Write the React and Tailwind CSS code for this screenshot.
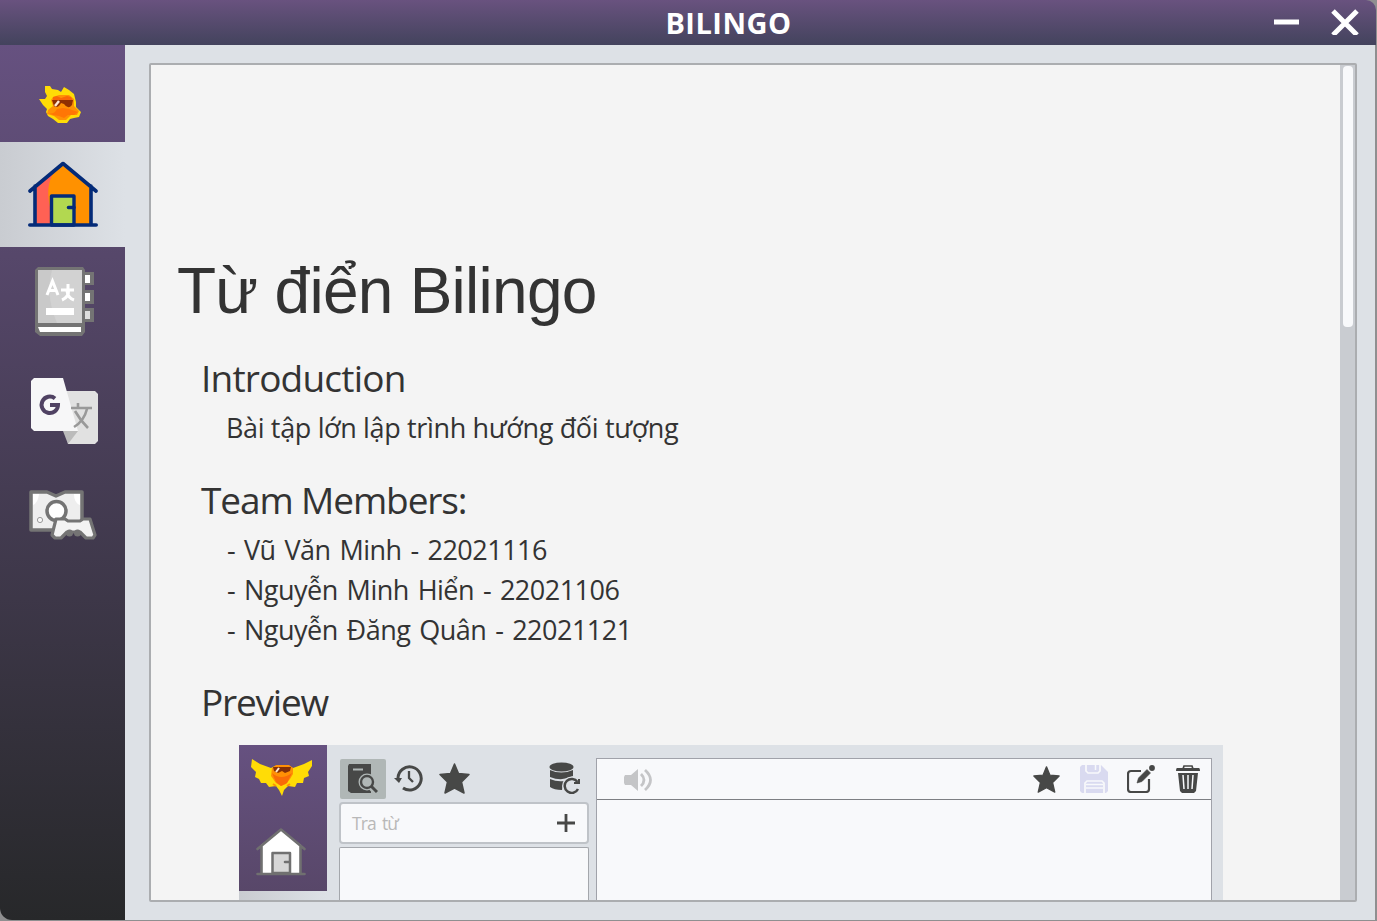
const HeadBird = () => (
  <svg viewBox="0 0 42 38" className="h-[38px] w-[42px]">
    <path d="M6 1 11 1 13 4 19 5 22 7 25 2 30 5 35 9 36 13 37 17 37 22 42 27 40 32 35 33 31 34 28 38 19 38 14 34 9 31 7 27 8 24 4 20 0 14 6 14 8 11 6 7z" fill="#ffdc06" />
    <path d="M14 12 20 10 30 10 35 14 35 21 40 26 38 30 32 30 27 35 20 35 15 31 8 29 9 25 14 21 12 15z" fill="#ff9205" />
    <path d="M14 12 18 11 22 13 28 11 32 12 34 16 32 18 14 18z" fill="#f96708" />
    <path d="M13 15H34L33 20Q29 25 25 19L22 18Q19 24 15 21z" fill="#8f3002" />
    <path d="M16 21 20 16" stroke="#ffe9d5" strokeWidth="2.4" />
    <path d="M9 28Q15 30 18 24L24 23 30 24 39 27 35 30 29 30 25 33 20 31 14 30z" fill="#ff7605" />
  </svg>
);

const House = () => (
  <svg viewBox="0 0 70 68" className="h-[68px] w-[70px]" strokeLinejoin="round" strokeLinecap="round">
    <path d="M7 24 35 3 63 24V64H7z" fill="#ff9100" />
    <path d="M7 24 26 11Q17 25 22 46V64H7z" fill="#ff6154" />
    <path d="M23.500 35H46V64H23.500z" fill="#b2d850" stroke="#042b78" strokeWidth="3.400" />
    <path d="M46 46.500H40.500M7 25V64M63 25V64M2 30 35 2.500 68 30M1.800 64H68.200" fill="none" stroke="#042b78" strokeWidth="3.600" />
  </svg>
);

const Dictionary = () => (
  <svg viewBox="0 0 60 70" className="h-[70px] w-[60px]">
    <path d="M3 0H48L50 3V65L47 69H5L0 65V3z" fill="#747474" />
    <path d="M3 3H47V56H3z" fill="#c9c9c9" />
    <path d="M17 3H47V56H22Q10 28 17 3z" fill="#d2d2d2" />
    <path d="M3 60H46V65H5z" fill="#fff" />
    <path d="M49 5H59V18H49zM49 23H59V37H49zM49 41H59V55H49z" fill="#747474" />
    <path d="M50 8H55V16H50zM50 26H55V34H50z" fill="#fff" />
    <path d="M50 44H55V52H50z" fill="#ddd" />
    <path d="M11 41H39V48H11z" fill="#fff" />
    <g fill="none" stroke="#fff" strokeWidth="3">
      <path d="M12 28 17.500 14 23 28M14 23.500H22M26 23H39M33 17V23M27 33Q34 30 33.500 23M32 24Q33 31 39 33" />
    </g>
  </svg>
);

const Translate = () => (
  <svg viewBox="0 0 68 66" className="h-[66px] w-[68px]">
    <path d="M32 13H64L67 16V63L64 66H37z" fill="#e1e1e1" />
    <path d="M32 53H47L37 66z" fill="#bbb" />
    <path d="M3 0H32L47 53H3L0 50V3z" fill="#f7f7f8" />
    <path d="M24 20.500A8.200 8.200 0 1 0 27 27H19" fill="none" stroke="#504263" strokeWidth="4" />
    <path d="M40 30H61M47 25V30M56 31Q53 43 43 49M44 33Q49 42 57 50" fill="none" stroke="#999" strokeWidth="2.600" />
  </svg>
);

const Games = () => (
  <svg viewBox="0 0 69 50" className="h-[50px] w-[69px]" strokeLinejoin="round">
    <path d="M3 2H19L28 6 37 2H54V40H3z" fill="#eee" stroke="#747474" strokeWidth="3.500" />
    <path d="M5 4H11Q10 13 5 15zM46 4H52V15Q46 13 46 4z" fill="#fff" />
    <circle cx="28.500" cy="21" r="9.500" fill="#fff" stroke="#747474" strokeWidth="3.500" />
    <circle cx="12" cy="30" r="2.600" fill="#f7f7f7" stroke="#999" strokeWidth="1" />
    <path d="M28 29H37L40 31H52L55 29H62L67 45 65 48H58L52 42H39L33 48H27L24 45z" fill="#f3f3f3" stroke="#747474" strokeWidth="3.200" />
    <circle cx="41.500" cy="43" r="3.500" fill="#747474" />
    <circle cx="49.500" cy="43" r="3.500" fill="#747474" />
  </svg>
);

const WingedBird = () => (
  <svg viewBox="0 0 62 38" className="h-[38px] w-[62px]">
    <path d="M1 0 9 5 20 9 24 7 31 8 38 7 42 9 53 5 61 1 61 7 57 13 58 17 53 19 52 24 46 24 44 28 37 27 33 31 31 37 28 31 25 27 18 28 15 24 10 24 8 20 4 18 5 13 0 8z" fill="#ffdc06" />
    <path d="M21 9 25 6 38 6 42 9 42 15 39 20 35 25 30 27 25 24 20 17z" fill="#ff9005" />
    <path d="M21 14Q30 22 41 14L36 24 30 27 25 23z" fill="#f96c08" />
    <path d="M22 8H40L39 12 34 14 31 12 27 14 23 12z" fill="#853006" />
    <path d="M25 13 28 9" stroke="#ffe9d5" strokeWidth="2" />
    <path d="M22 25 25 27M39 25 36 27" stroke="#ff9205" strokeWidth="2" />
  </svg>
);

const GreyHouse = () => (
  <svg viewBox="0 0 50 48" className="h-[48px] w-[50px]" strokeLinejoin="round" strokeLinecap="round">
    <path d="M5 17 25 2 45 17V46H5z" fill="#fff" />
    <path d="M16.500 25H34V45H16.500z" fill="#d6d6d6" stroke="#707070" strokeWidth="2.500" />
    <path d="M33 34H29M5.500 18V46M44.500 18V46M1.500 21 25 1.500 48.500 21M1.500 46H48.500" fill="none" stroke="#707070" strokeWidth="2.600" />
  </svg>
);

const STAR = "M15.500 1 19.500 10.500 30 11.500 22.500 19 25 30 15.500 25 6 30 8.500 19 1 11.500 11.500 10.500z";

const Star = ({ className }) => (
  <svg viewBox="0 0 31 31" className={className} stroke="#474847" strokeWidth="1.500" strokeLinejoin="round">
    <path d={STAR} />
  </svg>
);

const SearchBook = () => (
  <svg viewBox="0 0 30 32" className="h-[32px] w-[30px]">
    <path d="M1 1H23V30H3L0 28V3z" fill="#474847" />
    <path d="M5 6.500H15" stroke="#b0b7b6" strokeWidth="2" />
    <circle cx="19" cy="19" r="8.500" fill="#b0b7b6" />
    <path d="M23 25 28 30" stroke="#b0b7b6" strokeWidth="5" />
    <circle cx="19" cy="19" r="6" fill="none" stroke="#474847" strokeWidth="2.400" />
    <path d="M23 23 29 29" stroke="#474847" strokeWidth="3" />
  </svg>
);

const History = () => (
  <svg viewBox="0 0 29 28" className="h-[28px] w-[29px]" fill="none" stroke="#474847" strokeWidth="3">
    <path d="M4 14A11.600 11.600 0 1 1 9 24" />
    <path d="M15 7V14L19 18" strokeWidth="2.300" />
    <path d="M0 14H8L5 19z" fill="#474847" stroke="none" />
  </svg>
);

const Database = () => (
  <svg viewBox="0 0 31 32" className="h-[32px] w-[31px]">
    <g fill="#474847">
      <ellipse cx="12.500" cy="5" rx="12" ry="4.500" />
      <path d="M1 8Q12 13 24 8V14Q13 20 1 15zM1 17Q8 20 15 19L13 28Q5 28 1 25z" />
    </g>
    <circle cx="22.500" cy="24" r="9.500" fill="#dde1e6" />
    <path d="M28.500 20A7 7 0 1 0 29 27" fill="none" stroke="#474847" strokeWidth="2.500" />
    <path d="M25 21H30V17" fill="none" stroke="#474847" strokeWidth="2" />
  </svg>
);

const Speaker = () => (
  <svg viewBox="0 0 30 24" className="h-[24px] w-[30px]">
    <path d="M1 7H7L14 1V23L7 17H1L0 15V9z" fill="#c4c5c7" />
    <path d="M17 6Q23 12 17 18M21 2Q32 12 21 22" fill="none" stroke="#c4c5c7" strokeWidth="2.800" />
  </svg>
);

const Save = () => (
  <svg viewBox="0 0 28 28" className="h-[28px] w-[28px]">
    <path d="M2 0H21L28 7V26L26 28H2L0 26V2z" fill="#d9daf0" />
    <path d="M6 0V6L8 8H18L20 6V0M5 28V18L7 16H22L24 18V28" fill="none" stroke="#f8f9fb" strokeWidth="1.700" />
    <path d="M15.500 0V5M6 19.500H23M6 23H23" stroke="#f8f9fb" strokeWidth="1.500" />
  </svg>
);

const Edit = () => (
  <svg viewBox="0 0 28 28" className="h-[28px] w-[28px]">
    <path d="M14 6H4Q1 6 1 9V24Q1 27 4 27H19Q22 27 22 24V14" fill="none" stroke="#474847" strokeWidth="2.200" />
    <path d="M10 18 11.500 13 20 4.500 23.500 8 15 16.500z" fill="#474847" stroke="#474847" strokeWidth="0.600" />
    <circle cx="25" cy="3" r="2.900" fill="#474847" />
  </svg>
);

const Trash = () => (
  <svg viewBox="0 0 24 28" className="h-[28px] w-[24px]">
    <path d="M7 4 8 1H16L17 4" fill="none" stroke="#474847" strokeWidth="1.700" />
    <path d="M1 3H23Q24 3 24 6H0Q0 3 1 3zM2 8H22L20 26 18 28H6L4 26z" fill="#474847" />
    <path d="M7 10 8 24M12 10V24M17 10 16 24" stroke="#f8f9fb" strokeWidth="1.500" />
  </svg>
);

const members = ["- Vũ Văn Minh - 22021116", "- Nguyễn Minh Hiển - 22021106", "- Nguyễn Đăng Quân - 22021121"];

function TitleBar() {
  return (
    <header className="flex h-[45px] shrink-0 items-center rounded-tr-[10px] bg-linear-to-b from-[#69527f] to-[#43435d] pr-[17px]">
      <h1 className="flex-1 pl-[184px] text-center text-[29px] leading-[44px] font-bold text-white">
        <span className="tracking-[0.5px]">BILINGO</span>
      </h1>
      <svg viewBox="0 0 86 26" className="mb-[1px] h-[26px] w-[86px] shrink-0" stroke="#fff">
        <path d="M1 13H26" strokeWidth="5" />
        <path d="M60 2 84 26M84 2 60 26" strokeWidth="5" />
      </svg>
    </header>
  );
}

function Sidebar() {
  return (
    <nav className="flex w-[125px] shrink-0 flex-col rounded-bl-[12px] bg-linear-to-b from-[#665180] to-[#27282a]">
      <div className="flex h-[97px] pt-[40px] pl-[39px]"><HeadBird /></div>
      <div className="flex h-[105px] bg-linear-to-r from-[#c9ccd1] to-[#dde1e6] pt-[19px] pl-[28px]"><House /></div>
      <div className="flex h-[110px] pt-[20px] pl-[35px]"><Dictionary /></div>
      <div className="flex h-[110px] pt-[21px] pl-[31px]"><Translate /></div>
      <div className="flex h-[110px] pt-[23px] pl-[28px]"><Games /></div>
    </nav>
  );
}

function Preview() {
  return (
    <div className="ml-[88px] flex h-[156px] w-[984px] shrink-0 bg-[#dde1e6]">
      <div className="flex w-[88px] shrink-0 flex-col bg-linear-to-r from-[#c9ccd1] to-[#dde1e6]">
        <div className="flex h-[146px] flex-col bg-linear-to-b from-[#665180] to-[#584769] pt-[14px]">
          <div className="pl-[12px]"><WingedBird /></div>
          <div className="mt-[31px] pl-[17px]"><GreyHouse /></div>
        </div>
      </div>
      <div className="ml-[12px] flex w-[250px] shrink-0 flex-col pt-[14px]">
        <div className="flex h-[40px] items-center">
          <div className="ml-px flex h-[40px] w-[46px] items-center justify-center rounded-[2px] bg-[#b0b7b6]"><SearchBook /></div>
          <div className="ml-[8px] pb-[2px]"><History /></div>
          <Star className="mb-[2px] ml-[16px] h-[31px] w-[31px] fill-[#474847]" />
          <div className="ml-[79px] pb-[2px]"><Database /></div>
        </div>
        <div className="mt-[3px] flex h-[42px] shrink-0 items-center justify-between rounded-[4px] border-2 border-[#bfc3c8] bg-[#f8f9fb] pr-[11px] pl-[11px]">
          <span className="text-[17.5px] tracking-[-0.9px] text-[#b8b8b8] [word-spacing:2.5px]">Tra từ</span>
          <svg viewBox="0 0 20 20" className="h-[20px] w-[20px]"><path d="M1 10H19M10 1V19" stroke="#474847" strokeWidth="2.800" /></svg>
        </div>
        <div className="mt-[3px] flex-1 rounded-t-[2px] border border-b-0 border-[#a4a7ac] bg-[#f8f9fb]" />
      </div>
      <div className="mt-[13px] ml-[7px] flex w-[616px] shrink-0 flex-col border border-b-0 border-[#a0a2aa] bg-[#f8f9fb]">
        <div className="flex h-[41px] shrink-0 items-center border-b border-[#7d7f83] pr-[11px] pl-[27px]">
          <div className="pt-px"><Speaker /></div>
          <Star className="ml-auto h-[27px] w-[27px] fill-[#474847]" />
          <div className="ml-[20px]"><Save /></div>
          <div className="ml-[19px]"><Edit /></div>
          <div className="ml-[21px]"><Trash /></div>
        </div>
      </div>
    </div>
  );
}

function Article() {
  return (
    <main className="flex min-w-0 flex-1 flex-col overflow-hidden pt-[186px] text-[#333333]">
      <h2 className="pl-[26px] font-['Liberation_Sans',sans-serif] text-[64px] leading-[80px] tracking-[-0.73px] whitespace-nowrap">Từ điển Bilingo</h2>
      <h3 className="mt-[22px] pl-[50px] text-[37px] leading-[50px] tracking-[-0.8px]">Introduction</h3>
      <p className="mt-[5px] pl-[75px] text-[27px] leading-[40px] tracking-[-0.35px]">Bài tập lớn lập trình hướng đối tượng</p>
      <h3 className="mt-[27px] pl-[50px] text-[37px] leading-[50px] tracking-[-1.1px]">Team Members:</h3>
      <ul className="mt-[5px] pl-[76px] text-[27px] leading-[40px] tracking-[-0.5px] [word-spacing:2.3px]">
        {members.map((m) => (
          <li key={m}>{m}</li>
        ))}
      </ul>
      <h3 className="mt-[27px] mb-[18px] pl-[50px] text-[37px] leading-[50px] tracking-[-1.2px]">Preview</h3>
      <Preview />
    </main>
  );
}

export default function App() {
  return (
    <div className="flex h-[921px] w-[1377px] overflow-hidden bg-[#8f8f90] font-['Open_Sans','Noto_Sans',sans-serif]">
      <div className="mr-px mb-px flex flex-1 flex-col">
        <TitleBar />
        <div className="mr-px flex min-h-0 flex-1">
          <Sidebar />
          <div className="flex min-w-0 flex-1 bg-[#dde1e6] pt-[18px] pr-[18px] pb-[18px] pl-[24px]">
            <div className="flex min-w-0 flex-1 overflow-hidden rounded-[2px] border-2 border-[#abadb0] bg-[#f4f4f4]">
              <Article />
              <div className="flex w-[15px] shrink-0 justify-center bg-[#c9ccd1] pt-px">
                <div className="h-[261px] w-[10px] rounded-[4px] bg-[#f8f9fb]" />
              </div>
            </div>
          </div>
        </div>
      </div>
    </div>
  );
}
